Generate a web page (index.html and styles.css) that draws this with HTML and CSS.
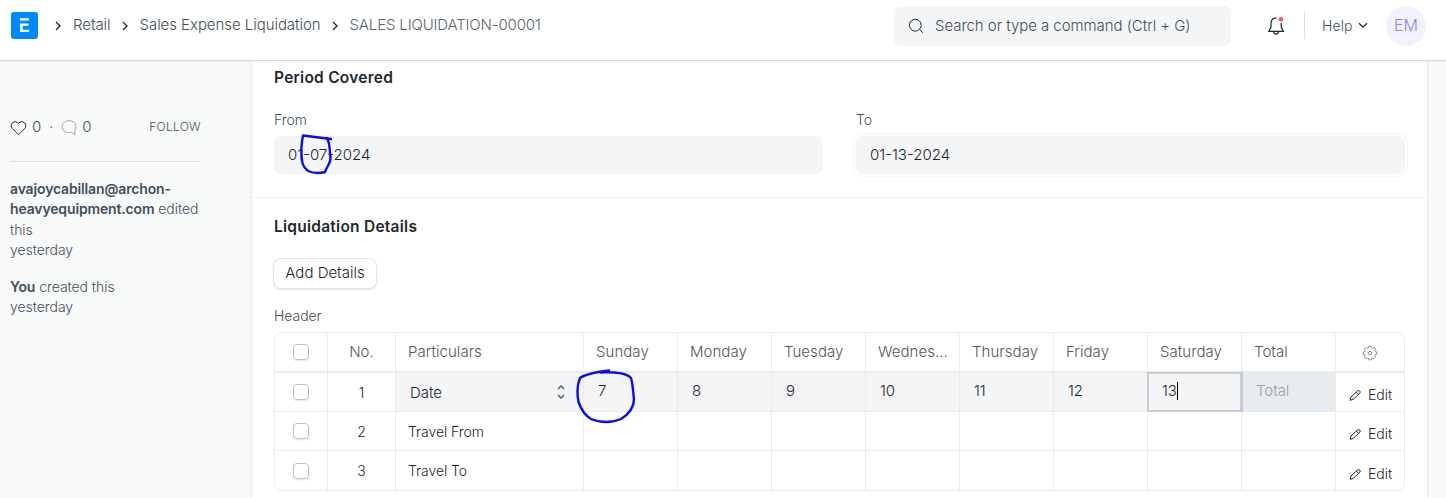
FILE: index.html
```html
<!DOCTYPE html>
<html lang="en">
<head>
    <meta charset="UTF-8">
    <meta name="viewport" content="width=device-width, initial-scale=1.0">
    <link rel="stylesheet" href="styles.css">
    <title>SALES LIQUIDATION-00001</title>
</head>
<body>
    <svg class="sprite">
        <symbol id="icon-right" viewBox="0 0 8 12"><path d="M2 2l4 4-4 4"/></symbol>
        <symbol id="icon-edit" viewBox="0 0 14 14"><path d="M2 12.300l.9-3.200 6.700-6.200a1.600 1.600 0 0 1 2.200 2.300L5.200 11.400zM8.300 4.100l2.300 2.300"/></symbol>
    </svg>

    <header class="navbar">
        <div class="breadcrumbs">
            <a class="logo" href="#">
                <svg width="27" height="27" viewBox="0 0 27 27"><rect width="27" height="27" rx="3"/><path d="M9 6.200h9v2.200H9zM9 11.500h8.500v2.200h-5.700v4H18.200v2.300H9z"/></svg>
            </a>
            <svg class="arrow"><use href="#icon-right"/></svg>
            <a class="crumb" href="#">Retail</a>
            <svg class="arrow"><use href="#icon-right"/></svg>
            <a class="crumb" href="#">Sales Expense Liquidation</a>
            <svg class="arrow"><use href="#icon-right"/></svg>
            <a class="crumb current" href="#">SALES LIQUIDATION-00001</a>
        </div>
        <div class="search">
            <svg width="16" height="16" viewBox="0 0 16 16"><circle cx="7.3" cy="7.2" r="5.9"/><path d="M11.5 11.5l3.3 3.3"/></svg>
            <span>Search or type a command (Ctrl + G)</span>
        </div>
        <svg class="bell" width="18" height="20" viewBox="0 0 18 20">
            <path d="M9.400 1.800C6 2 4 4 4 7v4L1.800 15.400h14.700L14.200 11V7M6.600 15.600a2.500 2.500 0 0 0 5 0"/>
            <circle cx="14" cy="3.300" r="2.300"/>
        </svg>
        <div class="help">
            <span>Help</span>
            <svg width="10" height="7" viewBox="0 0 10 7"><path d="M1 1.200l4 4 4-4"/></svg>
        </div>
        <div class="avatar">EM</div>
    </header>

    <div class="page">
        <aside class="sidebar">
            <div class="stats">
                <svg width="17" height="16" viewBox="0 0 17 16"><path d="M8.500 14.700L2.500 8.700a4.100 4.100 0 0 1 0-5.900 3.900 3.900 0 0 1 5.500 0l.5.6.5-.6a3.900 3.900 0 0 1 5.500 0 4.100 4.100 0 0 1 0 5.900z"/></svg>
                <span class="count">0</span>
                <span class="dot">·</span>
                <svg class="comment" width="16" height="17" viewBox="0 0 16 17"><path d="M13.800 15.800v-4.600A6.300 6.300 0 0 0 14.900 7.500c0-3.300-2.900-5.800-6.800-5.800S1.200 4.200 1.200 7.700s3 5.900 6.900 5.900c.8 0 1.700-.1 2.400-.4z"/></svg>
                <span class="count">0</span>
                <span class="follow">FOLLOW</span>
            </div>
            <p><b>avajoycabillan@archon-<br>heavyequipment.com</b> edited<br>this<br>yesterday</p>
            <p><b>You</b> created this<br>yesterday</p>
        </aside>

        <main class="form">
            <section class="period">
                <h2>Period Covered</h2>
                <div class="fields">
                    <div class="field">
                        <label>From</label>
                        <div class="control">01-07-2024
                            <svg class="mark" width="36" height="44" viewBox="0 0 36 44"><path d="M33 6L5 2.500C4 8 3 14 3.500 21s0 12 6.500 17c6 2.500 11 2.500 17 1 2-6 6-9 5.500-15C31 16 33 13 29 5"/></svg>
                        </div>
                    </div>
                    <div class="field outlined">
                        <label>To</label>
                        <div class="control">01-13-2024</div>
                    </div>
                </div>
            </section>

            <section class="details">
                <h2>Liquidation Details</h2>
                <button class="btn-add">Add Details</button>
                <label>Header</label>
                <div class="grid">
                    <div class="row head">
                        <div class="cell check"><i></i></div>
                        <div class="cell no">No.</div>
                        <div class="cell">Particulars</div>
                        <div class="cell">Sunday</div>
                        <div class="cell">Monday</div>
                        <div class="cell">Tuesday</div>
                        <div class="cell">Wednes...</div>
                        <div class="cell">Thursday</div>
                        <div class="cell">Friday</div>
                        <div class="cell">Saturday</div>
                        <div class="cell">Total</div>
                        <div class="cell gear">
                            <svg width="16" height="16" viewBox="0 0 16 16"><path d="M6.900 1.300h2.200l.5 1.600 1 .4 1.500-.8 1.500 1.500-.8 1.500.4 1 1.600.5v2.200l-1.600.5-.4 1 .8 1.500-1.500 1.500-1.500-.8-1 .4-.5 1.600H6.900l-.5-1.600-1-.4-1.500.8-1.500-1.500.8-1.500-.4-1-1.600-.5V7l1.600-.5.4-1-.8-1.500 1.500-1.500 1.500.8 1-.4z"/><circle cx="8" cy="8.100" r="1.800"/></svg>
                        </div>
                    </div>
                    <div class="row active">
                        <div class="cell check"><i></i></div>
                        <div class="cell no">1</div>
                        <div class="cell select">Date
                            <svg width="8" height="14" viewBox="0 0 8 14"><path d="M1 4l3-3 3 3M1 10l3 3 3-3"/></svg>
                        </div>
                        <div class="cell input">7
                            <svg class="mark" width="62" height="56" viewBox="0 0 62 56"><path d="M34 1.500C22 3 10 5 5 9 2 16 2 25 3.500 33 6 40 9 46 16 50c9 4 21 4 30 0 8-5 13-11 13-20C58 23 58 16 56 9c-3-4-9-5-17-5.500-5 0-10-.5-13 0"/></svg>
                        </div>
                        <div class="cell input">8</div>
                        <div class="cell input">9</div>
                        <div class="cell input">10</div>
                        <div class="cell input">11</div>
                        <div class="cell input">12</div>
                        <div class="cell input focus">13<span class="caret"></span></div>
                        <div class="cell input readonly">Total</div>
                        <div class="cell edit"><svg width="14" height="14"><use href="#icon-edit"/></svg>Edit</div>
                    </div>
                    <div class="row">
                        <div class="cell check"><i></i></div>
                        <div class="cell no">2</div>
                        <div class="cell">Travel From</div>
                        <div class="cell"></div>
                        <div class="cell"></div>
                        <div class="cell"></div>
                        <div class="cell"></div>
                        <div class="cell"></div>
                        <div class="cell"></div>
                        <div class="cell"></div>
                        <div class="cell"></div>
                        <div class="cell edit"><svg width="14" height="14"><use href="#icon-edit"/></svg>Edit</div>
                    </div>
                    <div class="row">
                        <div class="cell check"><i></i></div>
                        <div class="cell no">3</div>
                        <div class="cell">Travel To</div>
                        <div class="cell"></div>
                        <div class="cell"></div>
                        <div class="cell"></div>
                        <div class="cell"></div>
                        <div class="cell"></div>
                        <div class="cell"></div>
                        <div class="cell"></div>
                        <div class="cell"></div>
                        <div class="cell edit"><svg width="14" height="14"><use href="#icon-edit"/></svg>Edit</div>
                    </div>
                </div>
            </section>
        </main>
    </div>
</body>
</html>
```
FILE: styles.css
```css
* {
    box-sizing: border-box;
}
body {
    margin: 0;
    height: 498px;
    overflow: hidden;
    background-color: #f9fafa;
    font-family: Inter, "Liberation Sans", sans-serif;
    font-size: 14px;
    font-weight: 350;
    letter-spacing: -0.05px;
    color: #1f272e;
}
svg {
    fill: none;
    stroke: #1f272e;
    flex: none;
}
.sprite {
    display: none;
}

/* navbar */
.navbar {
    display: flex;
    align-items: center;
    height: 61px;
    padding: 0 20px 9px 11px;
    background-color: #fff;
    border-bottom: 1px solid #d6dadd;
    box-shadow: 0 1px 2px rgba(0, 0, 0, 0.08);
    position: relative;
    z-index: 2;
}
.breadcrumbs {
    display: flex;
    align-items: center;
    flex: 1;
    font-size: 15px;
    white-space: nowrap;
}
.logo {
    display: flex;
    margin-right: 16px;
}
.logo rect {
    fill: #0089ff;
    stroke: none;
}
.logo path {
    fill: #fff;
    stroke: none;
}
.arrow {
    width: 8px;
    height: 12px;
    margin-right: 11px;
    stroke-width: 1.3;
}
.crumb {
    margin-right: 10px;
    padding-bottom: 2px;
    color: #434f5a;
    text-decoration: none;
}
.current {
    color: #5a656e;
    letter-spacing: -0.15px;
}
.search {
    display: flex;
    align-items: center;
    gap: 11px;
    width: 337px;
    height: 40px;
    padding-left: 14px;
    border-radius: 7px;
    background-color: #f4f5f6;
    color: #434f5a;
    font-size: 15px;
    white-space: nowrap;
}
.bell {
    margin: 0 19px 0 36px;
    stroke-width: 1.2;
}
.bell circle {
    fill: #ff5858;
    stroke: none;
}
.help {
    display: flex;
    align-items: center;
    gap: 5px;
    height: 27px;
    width: 82px;
    padding-left: 17px;
    border-left: 1px solid #dcdfe1;
    color: #434f5a;
    letter-spacing: 0.1px;
}
.help svg {
    stroke-width: 1.3;
}
.avatar {
    width: 40px;
    height: 40px;
    line-height: 39px;
    border-radius: 50%;
    background-color: #f2f1fd;
    color: #8b85fa;
    font-size: 16px;
    text-align: center;
}

/* layout */
.page {
    display: flex;
    height: 437px;
}
.sidebar {
    width: 252px;
    padding: 56px 51px 0 10px;
    color: #434f5a;
    line-height: 20.4px;
}
.sidebar p {
    margin: 0 0 16px;
    white-space: nowrap;
}
.sidebar b {
    font-weight: 600;
    letter-spacing: -0.15px;
}
.stats {
    display: flex;
    align-items: center;
    height: 45px;
    margin-bottom: 17px;
    padding-bottom: 23px;
    border-bottom: 1px solid #dcdfe1;
}
.count {
    font-size: 15px;
    margin-left: 5px;
}
.dot {
    margin: 0 8px;
}
.comment {
    stroke: #98a1a9;
}
.follow {
    margin-left: auto;
    font-size: 12px;
    letter-spacing: 0.3px;
}
.form {
    width: 1175px;
    background-color: #fff;
    box-shadow: 0 0 3px rgba(0, 0, 0, 0.14);
}
h2 {
    margin: 0;
    font-size: 15.5px;
    font-weight: 600;
    line-height: 20px;
    letter-spacing: 0.25px;
}
label {
    display: block;
    line-height: 18px;
    color: #434f5a;
}
.period {
    height: 137px;
    padding: 7px 22px 0;
    border-bottom: 1px solid #f1f2f3;
}
.fields {
    display: flex;
    gap: 33px;
    margin-top: 23px;
}
.field {
    flex: 1;
}
.control {
    position: relative;
    height: 38px;
    margin-top: 7px;
    padding-left: 14px;
    border-radius: 7px;
    background-color: #f4f5f6;
    font-size: 15px;
    line-height: 37px;
    letter-spacing: 0;
}
.outlined .control {
    box-shadow: 0 0 0 2px #fff, 0 0 0 3px #f4f5f6;
}
.mark {
    position: absolute;
    stroke: #0a0af5;
    stroke-width: 2.4;
    stroke-linecap: round;
    stroke-linejoin: round;
    z-index: 3;
}
.control .mark {
    left: 24px;
    top: -3px;
}
.details {
    padding: 19px 22px 0;
}
.details label {
    margin-bottom: 7px;
}
.btn-add {
    display: block;
    width: 104px;
    height: 31px;
    margin: 21px 0 18px -1px;
    padding: 0 0 2px;
    border: 1px solid #e2e4e6;
    border-radius: 8px;
    background-color: #fff;
    box-shadow: 0 1px 2px rgba(0, 0, 0, 0.1);
    color: #1f272e;
    font: inherit;
    font-size: 15px;
    letter-spacing: 0;
}

/* child table */
.grid {
    width: 1131px;
    border: 1px solid #e9ecef;
    border-radius: 7px;
}
.row {
    display: grid;
    grid-template-columns: 53px 68px 188px repeat(8, 94px) 68px;
    height: 39px;
    border-bottom: 1px solid #e9ecef;
}
.row:last-child {
    border-bottom: 0;
}
.head {
    height: 40px;
    border-bottom-width: 2px;
    color: #505a62;
    font-size: 15px;
    letter-spacing: 0.05px;
}
.cell {
    display: flex;
    align-items: center;
    padding-left: 12px;
    border-right: 1px solid #e9ecef;
    white-space: nowrap;
}
.head .cell {
    padding-bottom: 2px;
}
.cell:last-child {
    border-right: 0;
}
.check,
.no,
.gear {
    justify-content: center;
    padding-left: 0;
}
.head .check {
    padding-bottom: 0;
}
.gear svg {
    stroke: #858d95;
    margin-top: 4px;
}
.check i {
    width: 16px;
    height: 16px;
    border: 1px solid #bcc2c8;
    border-radius: 4px;
    box-shadow: 0 1px 2px rgba(0, 0, 0, 0.1);
}
.select {
    justify-content: space-between;
    padding: 0 18px 0 14px;
    background-color: #f4f5f6;
    font-size: 15px;
}
.select svg {
    stroke: #4c5a67;
    stroke-width: 1.4;
}
.input {
    position: relative;
    padding: 0 0 3px 14px;
    background-color: #f4f5f6;
    font-size: 15px;
}
.input .mark {
    left: -9px;
    top: -4px;
}
.focus {
    z-index: 1;
    box-shadow: 0 0 0 1px #c9cdd2, inset 0 0 0 1px #c9cdd2;
    border-right-color: #c9cdd2;
}
.caret {
    width: 1px;
    height: 18px;
    background-color: #000;
}
.readonly {
    background-color: #e9ecef;
    color: #98a1a9;
}
.edit {
    gap: 6px;
    padding: 5px 0 0 12px;
}
.edit svg {
    margin-top: 1px;
}
```
